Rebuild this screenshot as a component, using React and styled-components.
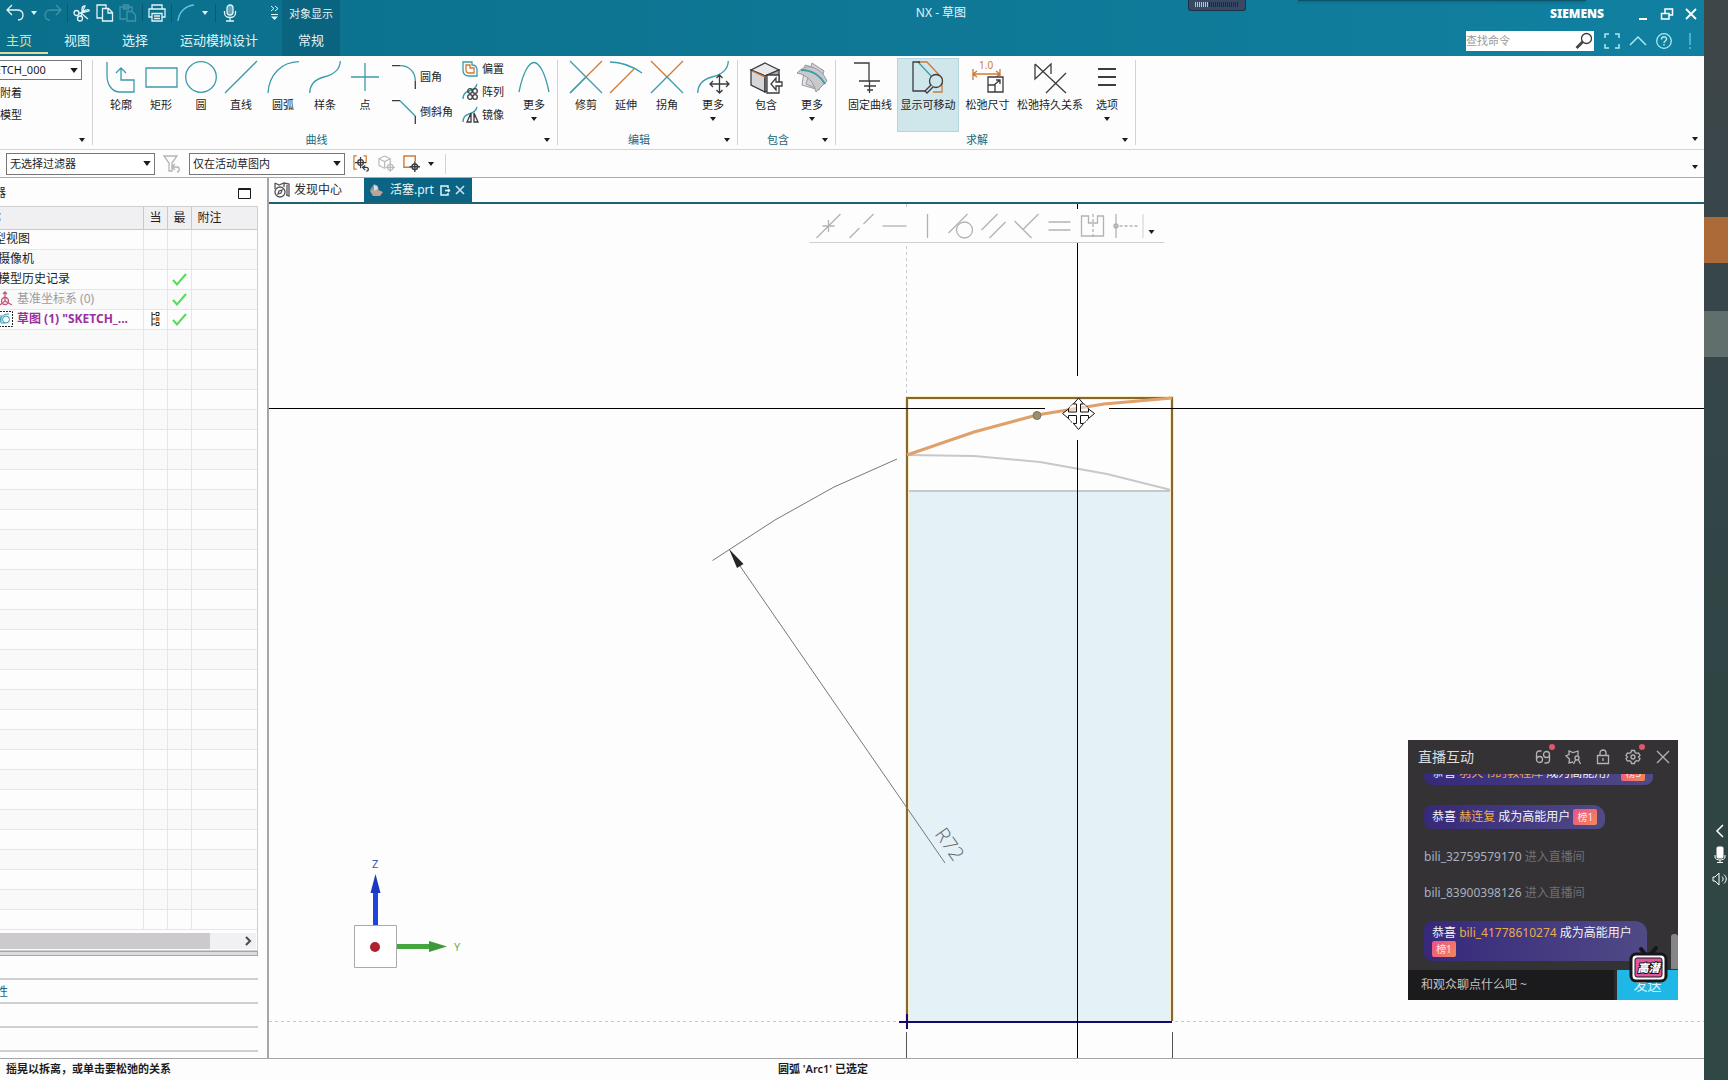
import React, { useState } from "react";
import styled, { createGlobalStyle } from "styled-components";

const GlobalStyle = createGlobalStyle`
    * {
        box-sizing: border-box;
    }

    body {
        margin: 0;
        background: #35464a;
        font-family: "Noto Sans", "Noto Sans CJK SC", sans-serif;
        font-size: 12px;
        line-height: 16px;
        color: #1c1c1e;
    }

    button, input, select {
        font: inherit;
        color: inherit;
        margin: 0;
        padding: 0;
        border: none;
        background: none;
        border-radius: 0;
        outline: none;
    }

    svg {
        display: block;
        fill: none;
        flex: none;
        overflow: visible;
    }
`;

const Screen = styled.div`
    display: grid;
    grid-template-columns: minmax(0, 1fr) 24px;
    min-height: 100vh;
`;

const Window = styled.div`
    display: flex;
    flex-direction: column;
    min-width: 0;
    overflow: hidden;
    background: #fdfdfd;
`;

/* title bar */

const Header = styled.header`
    position: relative;
    background: linear-gradient(90deg, #0a6f8b 0%, #0d7592 35%, #1180a0 100%);
    color: #e3f4f8;
`;

const HeaderRow = styled.div`
    display: flex;
    height: ${props => props.$height}px;
`;

const QuickBar = styled.div`
    display: flex;
    align-items: center;
    gap: 5px;
    width: 282px;
    padding: 0 0 2px 6px;
`;

const QuickButton = styled.button`
    display: flex;
    align-items: center;
    justify-content: center;
    width: ${props => props.$narrow ? 10 : 18}px;
    height: 22px;
    opacity: ${props => props.disabled ? 0.3 : 1};
    margin-left: ${props => props.$end ? 'auto' : 0};
    margin-right: ${props => props.$end ? 3 : 0}px;
`;

const QuickLine = styled.span`
    width: 1px;
    height: 18px;
    background: #075a73;
`;

const ContextTitle = styled.div`
    display: flex;
    align-items: center;
    justify-content: center;
    width: 58px;
    background: #0a6480;
    font-size: 11px;
`;

const Title = styled.h1`
    flex: 1;
    margin: 0;
    padding-top: 5px;
    font-size: 12px;
    font-weight: 400;
    line-height: 16px;
    text-align: center;
`;

const BrandBar = styled.div`
    display: flex;
    align-items: center;
    width: 162px;
    padding: 0 1px 0 8px;
    justify-content: space-between;
`;

const Brand = styled.span`
    font-size: 12px;
    font-weight: 900;
    color: #fff;
`;

const WindowButtons = styled.div`
    display: flex;
`;

const WindowButton = styled.button`
    display: flex;
    align-items: center;
    justify-content: center;
    width: 24px;
    height: 24px;
`;

const Tabs = styled.nav`
    display: flex;
    width: 282px;
    margin-left: -10px;
    margin-right: 10px;
`;

const Tab = styled.button`
    height: 27px;
    padding: 0 16px;
    font-size: 13px;
    white-space: nowrap;
    color: ${props => props.$active ? '#e0dc8c' : '#e3f4f8'};
    border-bottom: 2px solid ${props => props.$active ? '#dcdc9c' : 'transparent'};
`;

const ContextTab = styled.div`
    width: 58px;
    background: #0a6480;
`;

const HeaderTools = styled.div`
    display: flex;
    align-items: center;
    gap: 10px;
    margin-left: auto;
    padding: 0 12px 2px 0;
`;

const SearchBox = styled.label`
    display: flex;
    align-items: center;
    width: 128px;
    height: 20px;
    padding-right: 2px;
    background: #fff;
`;

const SearchInput = styled.input`
    flex: 1;
    min-width: 0;
    font-size: 11px;
    color: #333;
    &::placeholder {
        color: #9a9a9a;
        opacity: 1;
    }
`;

const IconButton = styled.button`
    display: flex;
    align-items: center;
    justify-content: center;
`;

const Recorder = styled.div`
    position: absolute;
    top: 0;
    right: 458px;
    width: 58px;
    height: 11px;
    padding: 2px 6px;
    border: 1px solid #1c3145;
    border-top: none;
    border-radius: 0 0 3px 3px;
    background: #384a63;
`;

const DockShadow = styled.div`
    position: absolute;
    top: 0;
    right: 118px;
    width: 288px;
    height: 1px;
    background: #0a5569;
    box-shadow: 0 1px 3px #0a5569;
`;

/* ribbon */

const Ribbon = styled.div`
    display: flex;
    height: 94px;
    padding-top: 2px;
    border-bottom: 1px solid #d5d5d7;
    font-size: 11px;
`;

const Group = styled.section`
    display: flex;
    flex-direction: column;
    width: ${props => props.$width}px;
    position: relative;
    &::after {
        content: "";
        position: absolute;
        top: 2px;
        bottom: 4px;
        right: 0;
        width: 1px;
        background: #d3d3d6;
    }
`;

const GroupItems = styled.div`
    display: grid;
    grid-template-columns: ${props => props.$cols};
    height: 74px;
    padding-left: ${props => props.$pad}px;
`;

const GroupFooter = styled.div`
    display: flex;
    align-items: center;
    justify-content: center;
    height: 16px;
    padding-right: 18px;
    position: relative;
    color: #21687c;
`;

const Launcher = styled.button`
    position: absolute;
    right: ${props => props.$edge ? 4 : 6}px;
    bottom: ${props => props.$edge ? 5 : 3}px;
    width: 10px;
    height: 10px;
    display: flex;
    align-items: center;
    justify-content: center;
    color: #1c1c1e;
`;

const Tool = styled.button`
    display: flex;
    flex-direction: column;
    align-items: center;
    gap: 4px;
    height: 74px;
    padding-top: 3px;
    white-space: nowrap;
    background: ${props => props.$active ? '#cfe6eb' : 'none'};
    box-shadow: ${props => props.$active ? 'inset 0 0 0 1px #b3d7de' : 'none'};
`;

const ToolStack = styled.div`
    display: flex;
    flex-direction: column;
    justify-content: space-between;
    padding: ${props => props.$tight ? '3px 0 9px' : '7px 0 8px 7px'};
`;

const SmallTool = styled.button`
    display: flex;
    align-items: center;
    gap: 4px;
    white-space: nowrap;
`;

const SketchGroup = styled.div`
    display: flex;
    flex-direction: column;
    align-items: flex-start;
    gap: 4px;
    height: 74px;
    padding-top: 2px;
    overflow: hidden;
`;

const SketchAction = styled.button`
    height: 18px;
    white-space: nowrap;
`;

const RibbonEnd = styled.div`
    flex: 1;
    position: relative;
`;

/* selection bar */

const SelectionBar = styled.div`
    display: flex;
    align-items: center;
    position: relative;
    height: 28px;
    padding-left: 6px;
    border-bottom: 1px solid #a9a9ac;
    font-size: 11px;
`;

const SelectBox = styled.div`
    position: relative;
    width: ${props => props.$width}px;
    height: ${props => props.$cut ? 20 : 22}px;
    margin-left: ${props => props.$cut ? -28 : 0}px;
    svg {
        position: absolute;
        right: 4px;
        top: 8px;
        pointer-events: none;
    }
`;

const Select = styled.select`
    appearance: none;
    width: 100%;
    height: 100%;
    padding: 0 16px 0 ${props => props.$pad || 3}px;
    border: 1px solid #77777a;
    background: #fff;
`;

const BarIcons = styled.div`
    display: flex;
    align-items: center;
    gap: 8px;
    padding: 0 8px;
`;

const BarDivider = styled.span`
    width: 1px;
    height: 20px;
    margin-left: 3px;
    background: #d3d3d6;
`;

/* body */

const Body = styled.div`
    display: flex;
    flex: 1;
`;

const SidePanel = styled.aside`
    width: 269px;
    flex: none;
    padding-right: 9px;
    border-right: 2px solid #a6a6a9;
    overflow: hidden;
`;

const PanelHead = styled.div`
    display: flex;
    align-items: center;
    justify-content: space-between;
    height: 28px;
    padding: 2px 7px 0 0;
`;

const PanelTitle = styled.h2`
    margin: 0 0 0 -54px;
    font-size: 12px;
    font-weight: 400;
`;

const TreeBox = styled.div`
    border: 1px solid #d0d0d3;
    border-left: none;
`;

const Tree = styled.table`
    width: 100%;
    table-layout: fixed;
    border-collapse: collapse;

    th, td {
        padding: 0;
        border-right: 1px solid #e6e6e8;
        border-bottom: 1px solid #e6e6e8;
        overflow: hidden;
        white-space: nowrap;
    }

    th:last-child, td:last-child {
        border-right: none;
    }

    th {
        height: 22px;
        background: #f0eff2;
        border-color: #c9c9cc;
        font-weight: 400;
        text-align: left;
    }

    td {
        height: 20px;
    }

    tbody tr:nth-child(even) {
        background: #f9f9fa;
    }
`;

const HeadCell = styled.span`
    display: block;
    padding-left: 6px;
`;

const NodeName = styled.span`
    display: flex;
    align-items: center;
    gap: 4px;
    height: 16px;
    margin-left: ${props => props.$left}px;
    color: ${props => props.$color || 'inherit'};
    font-weight: ${props => props.$bold ? 700 : 400};
`;

const CellIcon = styled.span`
    display: flex;
    justify-content: center;
`;

const ScrollTrack = styled.div`
    display: flex;
    align-items: center;
    justify-content: space-between;
    height: 16px;
    margin: 3px 1px 1px 0;
    padding-right: 4px;
    background: #f1f0f3;
`;

const ScrollThumb = styled.div`
    width: 210px;
    height: 16px;
    background: #cdcacd;
`;

const Splitter = styled.div`
    height: 5px;
    border: 1px solid #a6a6a9;
    border-left: none;
    background: #dcdbde;
`;

const Section = styled.button`
    display: block;
    width: 100%;
    height: 24px;
    padding-top: 2px;
    text-align: left;
    color: #21687c;
    border-bottom: 2px solid #cdcfd0;
    span {
        margin-left: -28px;
    }
`;

const Main = styled.main`
    display: flex;
    flex-direction: column;
    flex: 1;
    min-width: 0;
`;

const FileTabs = styled.div`
    display: flex;
    height: 26px;
    border-bottom: 2px solid #1d6173;
`;

const FileTab = styled.button`
    display: flex;
    align-items: center;
    gap: ${props => props.$active ? 6 : 4}px;
    width: ${props => props.$width}px;
    height: 24px;
    padding-left: 5px;
    background: ${props => props.$active ? '#0c6484' : 'none'};
    color: ${props => props.$active ? '#e3f4f8' : '#2a2a2c'};
`;

const Canvas = styled.div`
    position: relative;
    flex: 1;
    overflow: hidden;
    background: #fdfdfd;
`;

const Drawing = styled.svg`
    position: absolute;
    inset: 0;
    width: 100%;
    height: 100%;
`;

const RelationBar = styled.div`
    position: absolute;
    top: 5px;
    left: 50%;
    transform: translateX(-50%);
    display: flex;
    align-items: center;
    height: 34px;
    padding: 0 5px 0 3px;
    background: #fdfdfd;
    border-bottom: 1px solid #cfcfd1;
`;

const RelationButton = styled.button`
    display: flex;
    align-items: center;
    justify-content: center;
    width: 33px;
    height: 32px;
`;

const RelationMore = styled.button`
    display: flex;
    align-items: flex-end;
    justify-content: center;
    width: 17px;
    height: 24px;
    padding-bottom: 4px;
    border-left: 1px solid #cfcfd1;
`;

/* live chat */

const Chat = styled.section`
    position: absolute;
    right: 26px;
    bottom: 58px;
    width: 270px;
    background: #343235;
    color: #f2f2f4;
`;

const ChatHead = styled.div`
    display: flex;
    align-items: center;
    justify-content: space-between;
    height: 34px;
    padding: 0 7px 0 10px;
`;

const ChatTitle = styled.h2`
    margin: 0;
    font-size: 14px;
    font-weight: 400;
    color: #dcdcdf;
`;

const ChatTools = styled.div`
    display: flex;
    gap: 14px;
`;

const ChatButton = styled.button`
    position: relative;
    width: 16px;
    height: 16px;
`;

const Dot = styled.span`
    position: absolute;
    top: -5px;
    right: -4px;
    width: 6px;
    height: 6px;
    border-radius: 50%;
    background: #e0566a;
`;

const ChatBody = styled.div`
    position: relative;
    display: flex;
    flex-direction: column;
    justify-content: flex-end;
    align-items: flex-start;
    gap: 20px;
    height: 196px;
    padding: 0 20px 9px 16px;
    overflow: hidden;
`;

const Cheer = styled.div`
    flex: none;
    max-width: ${props => props.$wrap ? '223px' : 'none'};
    padding: 4px 8px;
    border-radius: 8px 12px 8px 8px;
    background: linear-gradient(90deg, #36297a, #504a86);
    line-height: 16px;
    white-space: ${props => props.$wrap ? 'normal' : 'nowrap'};
`;

const CheerName = styled.span`
    color: #e9ac4c;
`;

const RankBadge = styled.span`
    display: inline-block;
    width: 24px;
    height: 16px;
    border-radius: 2px;
    background: linear-gradient(135deg, #ee4f8c, #f18a55);
    font-size: 10px;
    line-height: 16px;
    text-align: center;
    vertical-align: top;
    color: #ffe6e6;
`;

const Entry = styled.div`
    flex: none;
    color: #a9b0bf;
    white-space: nowrap;
    span {
        color: #716f73;
    }
`;

const ChatThumb = styled.div`
    position: absolute;
    right: 0;
    bottom: 1px;
    width: 7px;
    height: 35px;
    border-radius: 3px 3px 0 0;
    background: #858489;
`;

const ChatForm = styled.form`
    display: flex;
    height: 30px;
`;

const ChatInput = styled.input`
    flex: 1;
    min-width: 0;
    padding-left: 13px;
    background: #1b1a1c;
    border-right: 3px solid #2a2a2d;
    &::placeholder {
        color: #c0c0c3;
        opacity: 1;
    }
`;

const SendButton = styled.button`
    width: 61px;
    background: #1fb7e6;
    font-size: 14px;
    color: #d8f2fb;
`;

const Sticker = styled.svg`
    position: absolute;
    right: 10px;
    bottom: 17px;
`;

/* bottom and desktop edge */

const StatusBar = styled.footer`
    display: grid;
    grid-template-columns: 772px 1fr;
    align-items: center;
    height: 22px;
    padding: 0 0 1px 6px;
    border-top: 1px solid #a6a6a9;
    font-size: 11px;
    font-weight: 600;
`;

const DesktopEdge = styled.div`
    display: flex;
    flex-direction: column;
    align-items: flex-end;
    overflow: hidden;
    padding-top: 217px;
    background: linear-gradient(180deg, #3f4648 0%, #38464a 20%, #2e4544 70%, #2f4745 100%);
`;

const EdgeBlock = styled.div`
    width: 24px;
    height: 46px;
    margin-bottom: 48px;
    background: ${props => props.$color};
`;

const EdgeIcons = styled.div`
    display: flex;
    flex-direction: column;
    align-items: center;
    gap: 9px;
    width: 16px;
    margin-top: 419px;
`;

const TEAL = "#3a9bab";
const ORANGE = "#cf7a35";
const INK = "#3c3c40";

function Caret({ color = "#1c1c1e", size = 6 }) {
    return (
        <svg width={size} height={size / 2 + 1} viewBox="0 0 6 4">
            <path d="M0 0h6L3 4z" fill={color} />
        </svg>
    );
}

function Icon({ size = 32, box = 32, stroke = TEAL, width = 1.3, children }) {
    return (
        <svg width={size} height={size} viewBox={`0 0 ${box} ${box}`} stroke={stroke} strokeWidth={width}>
            {children}
        </svg>
    );
}

const icons = {
    profile: <Icon><path d="M2 1v13c0 10 5 17 13 17h14V19H16V7M11 12l5-5 5 5" /></Icon>,
    rect: <Icon><path d="M1 7h31v19H1z" /></Icon>,
    circle: <Icon><circle cx="16" cy="16" r="15.3" /></Icon>,
    line: <Icon><path d="M0 32 32 0" /></Icon>,
    arc: <Icon><path d="M1 32C2 14 14 1 32 .7" /></Icon>,
    spline: <Icon><path d="M.7 32C1 22 7 18 15 16S31 10 31.300 0" /></Icon>,
    point: <Icon><path d="M16 2v28M2 16h28" /></Icon>,
    moreCurve: <Icon><path d="M1 31C5 11 11 1.500 16 1.500S27 11 31 31" /></Icon>,
    trim: <Icon><path d="M0 32 32 0" stroke={ORANGE} /><path d="M0 0l32 32M0 32l16-16" /></Icon>,
    extend: <Icon><path d="M0 32 24 8" stroke={ORANGE} /><path d="M0 1c13 0 22 4 32 11" /></Icon>,
    corner: <Icon><path d="M0 0l16 16L32 0" stroke={ORANGE} /><path d="M0 32l16-16 16 16" /></Icon>,
    moreEdit: (
        <Icon>
            <path d="M.7 32C1 22 7 18 15 16S31 10 31.300 0" />
            <path stroke={INK} d="M22.500 14v18M13 23h19M19.500 17l3-3 3 3M19.500 29l3 3 3-3M16 20l-3 3 3 3M29 20l3 3-3 3" />
        </Icon>
    ),
    include: (
        <Icon stroke={INK}>
            <path fill="#e9e9eb" d="M15 2 29 9 15 15 1 9z" />
            <path fill="#d6d6d9" d="M1 9v15l14 7V15z" />
            <path fill="#aaaaae" d="M15 15v16l14-7V9z" />
            <path stroke={ORANGE} d="M2 10l13 6" />
            <path fill="#fff" d="M17 14h12v18H17z" />
            <path fill="#fff" d="M32 21h-6v-4l-5 6 5 6v-4h6z" />
        </Icon>
    ),
    moreInclude: (
        <Icon stroke="#98989c" width={1}>
            <path fill="#e4e4e7" d="M9 4l18 5-4 20-17-5z" />
            <path fill="#d2d2d6" d="M16 2l12 8-6 18-12-5z" />
            <path fill="#c9c9cd" d="M1 12c5-5 9-7 14-6 8 2 13 7 16 14l-11 11C18 21 11 14 1 12z" />
            <path stroke={TEAL} strokeWidth="2" d="M5 9c12 0 20 7 24 14" />
        </Icon>
    ),
    fix: <Icon stroke={INK}><path d="M0 2h15v18M5 20h21M10 25h12M13 29h6M15.500 20v12" /></Icon>,
    showMovable: (
        <Icon stroke={INK}>
            <path stroke={ORANGE} d="M6 1h9l15 16v14h-9" />
            <path stroke={TEAL} d="M6 1l15 16" />
            <path d="M8 1H1v29h12" />
            <circle cx="24" cy="20" r="6.500" fill="#cfe6eb" />
            <path fill="#cfe6eb" d="M19 24l-6 6 2 2 6-6" />
        </Icon>
    ),
    relaxDim: (
        <Icon stroke={ORANGE}>
            <path d="M1 8v11M28 8v7M1 13h27M5 10l-4 3 4 3M24 10l4 3-4 3" />
            <text x="7" y="8" fontSize="10" fill={ORANGE} stroke="none">1.0</text>
            <path stroke={INK} fill="#fdfdfd" d="M16 16h15v15H16zM16 24h7v7M22 24l6-5M24 19h4v4" />
        </Icon>
    ),
    relaxRel: <Icon stroke={INK}><path d="M1 3v15L17 3v10M1 3l31 29M32 12 12 32" /></Icon>,
    options: <Icon stroke={INK} width={2}><path d="M7 8h18M7 16h18M7 24h18" /></Icon>,
};

function RibbonTool({ icon, label, more, active }) {
    return (
        <Tool type="button" $active={active}>
            {icons[icon]}
            <span>{label}</span>
            {more && <Caret />}
        </Tool>
    );
}

function RibbonGroup({ label, width, pad, cols, children }) {
    return (
        <Group $width={width}>
            <GroupItems $cols={cols} $pad={pad}>{children}</GroupItems>
            <GroupFooter>
                {label}
                <Launcher type="button" aria-label={label}><Caret /></Launcher>
            </GroupFooter>
        </Group>
    );
}

const treeRows = [
    { name: "模型视图", left: -18 },
    { name: "摄像机", left: -2 },
    { name: "模型历史记录", left: -2, check: true },
    { name: "基准坐标系 (0)", left: 0, color: "#9c9c9f", icon: "csys", check: true },
    { name: '草图 (1) "SKETCH_...', left: 0, color: "#9b2f9f", bold: true, icon: "sketch", current: true, check: true },
    ...Array.from({ length: 30 }, () => ({})),
];

const nodeIcons = {
    csys: (
        <svg width="13" height="16" viewBox="0 0 13 16" stroke="#c2557f" strokeWidth="1.300">
            <path d="M5 1v9L0 14M5 10l7 4M3 3l2-2 2 2" />
            <circle cx="5" cy="10" r="3.500" />
        </svg>
    ),
    sketch: (
        <svg width="13" height="16" viewBox="0 0 13 16" stroke="#2f9bb0">
            <path stroke="#222" strokeDasharray="2 1" d="M0 .5h12.500v15H0" />
            <path d="M0 11c0-5 3-8 9-8M1 4v8h4" />
            <circle cx="6" cy="8.500" r="3.500" />
        </svg>
    ),
};

function PartTree() {
    return (
        <TreeBox>
            <Tree>
                <colgroup>
                    <col />
                    <col width="24" />
                    <col width="24" />
                    <col width="66" />
                </colgroup>
                <thead>
                    <tr>
                        <th><NodeName $left={-23}>名称</NodeName></th>
                        <th><HeadCell>当</HeadCell></th>
                        <th><HeadCell>最</HeadCell></th>
                        <th><HeadCell>附注</HeadCell></th>
                    </tr>
                </thead>
                <tbody>
                    {treeRows.map((row, i) => (
                        <tr key={i}>
                            <td>
                                {row.name && (
                                    <NodeName $left={row.left} $color={row.color} $bold={row.bold}>
                                        {nodeIcons[row.icon]}
                                        {row.name}
                                    </NodeName>
                                )}
                            </td>
                            <td>
                                {row.current && (
                                    <CellIcon>
                                        <svg width="9" height="14" viewBox="0 0 9 14" stroke="#2b2b2d">
                                            <path d="M1 0v14M1 2.500h3M1 7h3M1 12h3M5 .5h3v3H5zM5 10.500h3v3H5z" />
                                            <path stroke={ORANGE} fill={ORANGE} d="M5 5.500h3v3H5z" />
                                        </svg>
                                    </CellIcon>
                                )}
                            </td>
                            <td>
                                {row.check && (
                                    <CellIcon>
                                        <svg width="14" height="13" viewBox="0 0 14 13" stroke="#55dd5a" strokeWidth="2">
                                            <path d="M1 7l4 4.500L14 1" />
                                        </svg>
                                    </CellIcon>
                                )}
                            </td>
                            <td></td>
                        </tr>
                    ))}
                </tbody>
            </Tree>
            <ScrollTrack>
                <ScrollThumb />
                <svg width="7" height="8" viewBox="0 0 7 8" stroke="#4a4a4d" strokeWidth="2"><path d="M1 0l4 4-4 4" /></svg>
            </ScrollTrack>
        </TreeBox>
    );
}

const relations = [
    { name: "重合", shape: <path d="M0 24 24 0M6 12h6v6M18 12h-6V6" /> },
    { name: "共线", shape: <path d="M0 24 10 14M14 10 24 0" /> },
    { name: "水平", shape: <path d="M0 12h24" /> },
    { name: "竖直", shape: <path d="M12 0v24" /> },
    { name: "相切", shape: <><path d="M0 19 19 0" /><circle cx="16" cy="16" r="8" /></> },
    { name: "平行", shape: <path d="M0 16 16 0M8 24 24 8" /> },
    { name: "垂直", shape: <path d="M0 7l17 17M8 16 24 0" /> },
    { name: "相等", shape: <path d="M1 8h22M1 16h22" /> },
    { name: "对称", shape: <><path d="M1 2h7v7h9V2h6v20H1z" /><path strokeDasharray="3 2" d="M12.500 0v24" /></> },
    { name: "中点对齐", shape: <><path d="M2.500 0v24" /><circle cx="2.500" cy="12" r="2" fill="#bbb" /><path strokeDasharray="3 2" d="M6 12h18" /></> },
];

function SketchDrawing() {
    return (
        <Drawing>
            {/* model coordinates start at the window corner */}
            <g transform="translate(-269 -204)">
                <path fill="#e4f1f6" d="M908 491h263v530H908z" />
                <path stroke="#c9c9cc" strokeDasharray="3 3" d="M906.500 204v193M269 1021.500h1435" />
                <path stroke="#555" d="M906.500 1032v26M1172.500 1032v26" />
                <path stroke="#c8c8ca" strokeWidth="2" d="M907 491h265M907 455l67 1 66 6 67 12 64 16" />
                <path stroke="#f7ecc8" strokeWidth="4" d="M907 1021V398h265v623" />
                <path stroke="#86672f" strokeWidth="2" d="M907 1021V398h265v623" />
                <path stroke="#dfa06a" strokeWidth="3" d="M907 455l67-23 63-17 67-11 68-6" />
                <path stroke="#12096b" strokeWidth="2" d="M899 1022h273M907 1014v15" />
                <path stroke="#77777a" d="M712.500 560.500 775 520l59-33 63-28M740 566l205 297" />
                <path fill="#26262a" d="M729 549l14.500 15-6.500 4z" />
                <text
                    transform="translate(934 834) rotate(55)"
                    fontFamily="'Open Sans', sans-serif"
                    fontSize="20"
                    fontWeight="300"
                    fill="#5f666a"
                >
                    R72
                </text>
                <path stroke="#000" d="M1077.500 204v172M1077.500 440v618M269 408.500h776M1109 408.500h595" />
                <circle cx="1037" cy="415.500" r="4" fill="#97906f" stroke="#7c7658" />
                <circle cx="1078.500" cy="413.500" r="11" stroke="#111" strokeDasharray="2 1" fill="#fff" fillOpacity=".5" />
                <path
                    stroke="#111"
                    fill="#fff"
                    d="M1078.500 398l5 6h-3v8h8v-3l6 4.500-6 5v-3h-8v8h3l-5 6-5-6h3v-8h-8v3l-6-5 6-4.500v3h8v-8h-3z"
                />

                <path fill="#fff" stroke="#aaaaad" d="M354.500 925.500h42v42h-42z" />
                <path fill="#1c46dd" d="M373 925v-33h5v33z" />
                <path fill="#1a38c4" d="M375.500 874l5 19h-10z" />
                <path fill="#43a63f" d="M397 944h33v5h-33z" />
                <path fill="#3c9a3a" d="M429 941l18 5.500-18 5.500z" />
                <circle cx="375" cy="947" r="5" fill="#b01f30" />
                <text x="372" y="868" fontSize="11" fill="#3a58b8">Z</text>
                <text x="454" y="951" fontSize="11" fill="#6bae68">Y</text>
            </g>
        </Drawing>
    );
}

function LiveChat() {
    const [message, setMessage] = useState('');

    const onSubmit = (e) => {
        e.preventDefault();
        setMessage('');
    };

    return (
        <Chat>
            <ChatHead>
                <ChatTitle>直播互动</ChatTitle>
                <ChatTools>
                    <ChatButton type="button" aria-label="连线">
                        <Icon size={16} box={16} stroke="#b4b4b7">
                            <path d="M6.500 2H4.500c-2 0-3 1-3 3v5" />
                            <circle cx="4.500" cy="10.500" r="3" />
                            <circle cx="11.500" cy="5.500" r="3" />
                            <path d="M14.500 6v5c0 2-1 3-3 3H9.500" />
                        </Icon>
                        <Dot />
                    </ChatButton>
                    <ChatButton type="button" aria-label="互动">
                        <Icon size={16} box={16} stroke="#b4b4b7">
                            <path d="M8 13l-4 1 .5-4L1 7l3-1.500L4 2l4 1.500L13 2v4.500" />
                            <circle cx="12" cy="9" r="2" />
                            <path d="M8.500 15l2-4M15.500 15l-2-4" />
                        </Icon>
                    </ChatButton>
                    <ChatButton type="button" aria-label="锁定">
                        <Icon size={16} box={16} stroke="#b4b4b7">
                            <path d="M2.500 6.500h11v8h-11zM5 6V4c0-4 6-4 6 0v2M8 9v3" />
                        </Icon>
                    </ChatButton>
                    <ChatButton type="button" aria-label="设置">
                        <Icon size={16} box={16} stroke="#b4b4b7">
                            <path d="M6.500 1.500h3l.6 2 1.500.9 2-.5 1.400 2.500L13.500 8l1.500 1.600-1.400 2.500-2-.5-1.500.9-.6 2h-3l-.6-2-1.500-.9-2 .5L1 9.600 2.500 8 1 6.400l1.400-2.500 2 .5 1.500-.9z" />
                            <circle cx="8" cy="8" r="2" />
                        </Icon>
                        <Dot />
                    </ChatButton>
                    <ChatButton type="button" aria-label="关闭">
                        <Icon size={16} box={16} stroke="#b4b4b7"><path d="M2 2l12 12M14 2 2 14" /></Icon>
                    </ChatButton>
                </ChatTools>
            </ChatHead>
            <ChatBody>
                <Cheer>恭喜 <CheerName>羽天书的教程库</CheerName> 成为高能用户 <RankBadge>榜3</RankBadge></Cheer>
                <Cheer>恭喜 <CheerName>赫连复</CheerName> 成为高能用户 <RankBadge>榜1</RankBadge></Cheer>
                <Entry>bili_32759579170 <span>进入直播间</span></Entry>
                <Entry>bili_83900398126 <span>进入直播间</span></Entry>
                <Cheer $wrap>恭喜 <CheerName>bili_41778610274</CheerName> 成为高能用户 <RankBadge>榜1</RankBadge></Cheer>
                <ChatThumb />
            </ChatBody>
            <ChatForm onSubmit={onSubmit}>
                <ChatInput
                    aria-label="聊天"
                    value={message}
                    onChange={(e) => setMessage(e.target.value)}
                    placeholder="和观众聊点什么吧 ~"
                />
                <SendButton type="submit">发送</SendButton>
            </ChatForm>
            <Sticker width="40" height="37" viewBox="0 0 40 37">
                <path stroke="#17161a" strokeWidth="4" strokeLinecap="round" d="M13 3l4 5M28 2l-5 6" />
                <rect x="3" y="8" width="35" height="27" rx="5" fill="#fff" stroke="#17161a" strokeWidth="3" />
                <rect x="7" y="12" width="27" height="19" rx="2" fill="#e2559a" stroke="#17161a" strokeWidth="1" />
                <text
                    x="20.500"
                    y="26"
                    textAnchor="middle"
                    fontSize="11"
                    fontWeight="900"
                    fontStyle="italic"
                    fill="#fff"
                    stroke="#17161a"
                    strokeWidth="2"
                    paintOrder="stroke"
                >
                    高潜
                </text>
            </Sticker>
        </Chat>
    );
}

function AppHeader() {
    return (
        <Header>
            <HeaderRow $height={27}>
                <QuickBar>
                    <QuickButton type="button" aria-label="撤消">
                        <Icon size={18} box={18} stroke="#e3f4f8"><path d="M6 1 1 6l5 5M1 6h10c4 0 6 2 6 5s-2 5-5 5" /></Icon>
                    </QuickButton>
                    <QuickButton type="button" aria-label="撤消列表" $narrow><Caret color="#e3f4f8" /></QuickButton>
                    <QuickButton type="button" aria-label="重做" disabled>
                        <Icon size={18} box={18} stroke="#bfe6ef"><path d="M12 1l5 5-5 5M17 6H7c-4 0-6 2-6 5s2 5 5 5" /></Icon>
                    </QuickButton>
                    <QuickLine />
                    <QuickButton type="button" aria-label="剪切">
                        <Icon size={18} box={18} stroke="#e3f4f8">
                            <circle cx="3.500" cy="9" r="2.500" />
                            <circle cx="7" cy="14.500" r="2.500" />
                            <path d="M6 9.500l10-2.500c1-1-1-2-3-1l-7 3.500M8 12l4-10c-2 0-3 1-3 3v5l6 5" />
                        </Icon>
                    </QuickButton>
                    <QuickButton type="button" aria-label="复制">
                        <Icon size={18} box={18} stroke="#e3f4f8"><path d="M6 14H1V1h9v3M6.500 4.500h6l4 4v8.500h-10zM12 5v4h4" /></Icon>
                    </QuickButton>
                    <QuickButton type="button" aria-label="粘贴" disabled>
                        <Icon size={18} box={18} stroke="#bfe6ef"><path d="M7 15H1V3h12v4M4.500 1h5v4h-5zM8 7.500h5l3.500 3.500v6H8z" /></Icon>
                    </QuickButton>
                    <QuickLine />
                    <QuickButton type="button" aria-label="打印">
                        <Icon size={18} box={18} stroke="#e3f4f8"><path d="M4 5V1h10v4M4 13H1V5h16v8h-3M4 9.500h10V17H4zM6 12h6M6 14.500h6" /></Icon>
                    </QuickButton>
                    <QuickLine />
                    <QuickButton type="button" aria-label="圆弧">
                        <Icon size={18} box={18} stroke="#5ecbe4"><path d="M1 17C2 8 8 2 17 1" /></Icon>
                    </QuickButton>
                    <QuickButton type="button" aria-label="圆弧列表" $narrow><Caret color="#e3f4f8" /></QuickButton>
                    <QuickLine />
                    <QuickButton type="button" aria-label="语音">
                        <Icon size={18} box={18} stroke="#e3f4f8">
                            <rect x="6" y="1" width="6" height="10" rx="3" fill="#e3f4f8" fillOpacity=".4" />
                            <path d="M3.500 7v2c0 6 11 6 11 0V7M9 13.500V17M5 17h8" />
                        </Icon>
                    </QuickButton>
                    <QuickButton type="button" aria-label="更多命令" $narrow $end>
                        <svg width="9" height="14" viewBox="0 0 9 14" stroke="#e3f4f8">
                            <path d="M1 0l3 2.500L1 5M5 0l3 2.500L5 5M1 8.500h7" />
                            <path fill="#e3f4f8" stroke="none" d="M1 10.500h7L4.500 14z" />
                        </svg>
                    </QuickButton>
                </QuickBar>
                <ContextTitle>对象显示</ContextTitle>
                <Title>NX - 草图</Title>
                <BrandBar>
                    <Brand>SIEMENS</Brand>
                    <WindowButtons>
                        <WindowButton type="button" aria-label="最小化">
                            <Icon size={12} box={12} stroke="#fff" width={2}><path d="M2 11h8" /></Icon>
                        </WindowButton>
                        <WindowButton type="button" aria-label="还原">
                            <Icon size={12} box={12} stroke="#fff" width={1.5}><path d="M4 5V1h7.500v6H8M.5 5.500H8V11H.5z" /></Icon>
                        </WindowButton>
                        <WindowButton type="button" aria-label="关闭">
                            <Icon size={12} box={12} stroke="#fff" width={1.8}><path d="M1 1l10 10M11 1 1 11" /></Icon>
                        </WindowButton>
                    </WindowButtons>
                </BrandBar>
            </HeaderRow>
            <HeaderRow $height={29}>
                <Tabs>
                    <Tab type="button" $active>主页</Tab>
                    <Tab type="button">视图</Tab>
                    <Tab type="button">选择</Tab>
                    <Tab type="button">运动模拟设计</Tab>
                </Tabs>
                <ContextTab>
                    <Tab type="button">常规</Tab>
                </ContextTab>
                <HeaderTools>
                    <SearchBox>
                        <SearchInput aria-label="查找命令" placeholder="查找命令" />
                        <Icon size={16} box={16} stroke={INK}>
                            <circle cx="10.500" cy="5.500" r="5" />
                            <path d="M7 9.500 1.500 15M6 8.500.5 14l1.500 1.500" />
                        </Icon>
                    </SearchBox>
                    <IconButton type="button" aria-label="全屏">
                        <Icon size={16} box={16} stroke="#aeeaf2" width={1.5}><path d="M5 1H1v4M11 1h4v4M5 15H1v-4M11 15h4v-4" /></Icon>
                    </IconButton>
                    <IconButton type="button" aria-label="最小化功能区">
                        <Icon size={16} box={16} stroke="#aeeaf2" width={1.5}><path d="M0 12l8-8 8 8" /></Icon>
                    </IconButton>
                    <IconButton type="button" aria-label="帮助">
                        <Icon size={16} box={16} stroke="#aeeaf2">
                            <circle cx="8" cy="8" r="7.300" />
                            <path strokeWidth="1.500" d="M5.500 6.500c0-3.500 5-3.500 5-.5 0 2-2.500 2-2.500 4M8 11v1.500" />
                        </Icon>
                    </IconButton>
                    <svg width="10" height="16" viewBox="0 0 10 16" stroke="#3db6cf" strokeWidth="2"><path d="M8 0v12M8 14v2" /></svg>
                </HeaderTools>
            </HeaderRow>
            <DockShadow />
            <Recorder>
                <svg width="44" height="5" viewBox="0 0 44 5">
                    <path stroke="#1d2a3a" strokeWidth="5" strokeDasharray="1 1" d="M14 2.500h30" />
                    <path stroke="#7fe6c6" strokeWidth="5" strokeDasharray="1 1" d="M0 2.500h14" />
                </svg>
            </Recorder>
        </Header>
    );
}

function App() {
    return (
        <Screen>
            <GlobalStyle />
            <Window>
                <AppHeader />

                <Ribbon>
                    <Group $width={93}>
                        <SketchGroup>
                            <SelectBox $width={110} $cut>
                                <Select aria-label="草图名" $pad={9} defaultValue="SKETCH_000">
                                    <option>SKETCH_000</option>
                                </Select>
                                <Caret size={8} />
                            </SelectBox>
                            <SketchAction type="button">附着</SketchAction>
                            <SketchAction type="button">模型</SketchAction>
                        </SketchGroup>
                        <GroupFooter>
                            <Launcher type="button" aria-label="草图"><Caret /></Launcher>
                        </GroupFooter>
                    </Group>
                    <RibbonGroup label="曲线" width={465} pad={8} cols="40px 40px 40px 40px 44px 40px 40px 77px 52px 40px">
                        <RibbonTool icon="profile" label="轮廓" />
                        <RibbonTool icon="rect" label="矩形" />
                        <RibbonTool icon="circle" label="圆" />
                        <RibbonTool icon="line" label="直线" />
                        <RibbonTool icon="arc" label="圆弧" />
                        <RibbonTool icon="spline" label="样条" />
                        <RibbonTool icon="point" label="点" />
                        <ToolStack>
                            <SmallTool type="button">
                                <Icon size={24} box={24}><path stroke={INK} d="M0 .7h8M23.300 16v8" /><path d="M8 .7c9 0 15.300 6 15.300 15.300" /></Icon>
                                圆角
                            </SmallTool>
                            <SmallTool type="button">
                                <Icon size={24} box={24}><path stroke={INK} d="M0 .7h8M23.300 16v8" /><path d="M8 .7 23.300 16" /></Icon>
                                倒斜角
                            </SmallTool>
                        </ToolStack>
                        <ToolStack $tight>
                            <SmallTool type="button">
                                <Icon size={16} box={16}>
                                    <path d="M1 1h9v3c3 0 5 2 5 5v6H7c-4 0-6-2-6-6z" />
                                    <path stroke={ORANGE} d="M4 4h4v3h4v5H7c-2 0-3-1-3-3z" />
                                </Icon>
                                偏置
                            </SmallTool>
                            <SmallTool type="button">
                                <Icon size={16} box={16}>
                                    <path d="M1 15c0-5 2-7 6-8s7-3 8-7" />
                                    <g stroke={INK}>
                                        <circle cx="8" cy="7" r="2.300" /><circle cx="13" cy="7" r="2.300" />
                                        <circle cx="8" cy="13" r="2.300" /><circle cx="13" cy="13" r="2.300" />
                                    </g>
                                </Icon>
                                阵列
                            </SmallTool>
                            <SmallTool type="button">
                                <Icon size={16} box={16}>
                                    <path d="M1 15c0-5 2-7 6-8s7-3 8-7" />
                                    <path stroke={INK} d="M9 6v9H5zM12 6v9h4z" />
                                </Icon>
                                镜像
                            </SmallTool>
                        </ToolStack>
                        <RibbonTool icon="moreCurve" label="更多" more />
                    </RibbonGroup>
                    <RibbonGroup label="编辑" width={180} pad={8} cols="40px 40px 42px 50px">
                        <RibbonTool icon="trim" label="修剪" />
                        <RibbonTool icon="extend" label="延伸" />
                        <RibbonTool icon="corner" label="拐角" />
                        <RibbonTool icon="moreEdit" label="更多" more />
                    </RibbonGroup>
                    <RibbonGroup label="包含" width={98} pad={4} cols="48px 44px">
                        <RibbonTool icon="include" label="包含" />
                        <RibbonTool icon="moreInclude" label="更多" more />
                    </RibbonGroup>
                    <RibbonGroup label="求解" width={300} pad={7} cols="54px 62px 57px 68px 46px">
                        <RibbonTool icon="fix" label="固定曲线" />
                        <RibbonTool icon="showMovable" label="显示可移动" active />
                        <RibbonTool icon="relaxDim" label="松弛尺寸" />
                        <RibbonTool icon="relaxRel" label="松弛持久关系" />
                        <RibbonTool icon="options" label="选项" more />
                    </RibbonGroup>
                    <RibbonEnd>
                        <Launcher type="button" aria-label="功能区选项" $edge><Caret /></Launcher>
                    </RibbonEnd>
                </Ribbon>

                <SelectionBar>
                    <SelectBox $width={149}>
                        <Select aria-label="选择过滤器" defaultValue="无选择过滤器">
                            <option>无选择过滤器</option>
                        </Select>
                        <Caret size={8} />
                    </SelectBox>
                    <BarIcons>
                        <IconButton type="button" aria-label="重置过滤器">
                            <Icon size={18} box={18} stroke="#b4b4b8"><path d="M1 1h13L9 8v8H6V8zM12 9l-3 3 3 3M9 12h5c3 0 3 5 0 5" /></Icon>
                        </IconButton>
                    </BarIcons>
                    <SelectBox $width={156}>
                        <Select aria-label="选择范围" defaultValue="仅在活动草图内">
                            <option>仅在活动草图内</option>
                        </Select>
                        <Caret size={8} />
                    </SelectBox>
                    <BarIcons>
                        <IconButton type="button" aria-label="捕捉点">
                            <Icon size={17} box={18} stroke={INK}>
                                <path stroke={ORANGE} d="M4 1H1v14h3M11 1h3v7" />
                                <circle cx="8" cy="8" r="3" />
                                <path d="M8 2v12M2 8h12M13 11l-3 2 3 3M10 13h4c3 0 3 4 0 4" />
                            </Icon>
                        </IconButton>
                        <IconButton type="button" aria-label="选择体">
                            <Icon size={17} box={18} stroke="#bcbcc0">
                                <path d="M7 1l6 3v5M7 1 1 4v7l6 3V7L1 4M7 7l6-3" />
                                <circle cx="13" cy="13" r="3" />
                                <path d="M13 8v10M8 13h10" />
                            </Icon>
                        </IconButton>
                        <IconButton type="button" aria-label="选择区域">
                            <Icon size={17} box={18} stroke={INK} width={1.5}>
                                <path stroke={ORANGE} d="M8 13H1V1h12v6" />
                                <circle cx="12.500" cy="12.500" r="3" />
                                <path d="M12.500 7v11M7 12.500h11" />
                            </Icon>
                        </IconButton>
                        <IconButton type="button" aria-label="更多选择"><Caret /></IconButton>
                    </BarIcons>
                    <BarDivider />
                    <Launcher type="button" aria-label="工具条选项" $edge><Caret /></Launcher>
                </SelectionBar>

                <Body>
                    <SidePanel>
                        <PanelHead>
                            <PanelTitle>部件导航器</PanelTitle>
                            <svg width="13" height="11" viewBox="0 0 13 11"><path stroke="#1c1c1e" d="M.5.5h12v10H.5zM0 1.500h13" /></svg>
                        </PanelHead>
                        <PartTree />
                        <Splitter />
                        <Section type="button" aria-label="依附关系" />
                        <Section type="button"><span>相关性</span></Section>
                        <Section type="button" aria-label="细节" />
                        <Section type="button" aria-label="预览" />
                    </SidePanel>

                    <Main>
                        <FileTabs>
                            <FileTab type="button" $width={95}>
                                <Icon size={16} box={16} stroke="#55555a">
                                    <path d="M1 1l4 2 5-2 5 1v12l-3-1M1 1v6M10 1v4M13 3v10" />
                                    <circle cx="6" cy="10" r="5" />
                                    <path d="M4 12l1-3 3-1-1 3z" />
                                </Icon>
                                发现中心
                            </FileTab>
                            <FileTab type="button" $width={108} $active>
                                <svg width="15" height="14" viewBox="0 0 15 14">
                                    <path fill="#8d959b" d="M5 1l4 2 1 5-6 3-3-4z" />
                                    <path fill="#b9a39b" d="M1 8l6-2 7 3-3 4H4z" />
                                    <path fill="#d9dde0" d="M5 2l3 1 1 3-4 2z" />
                                </svg>
                                活塞.prt
                                <svg width="10" height="11" viewBox="0 0 10 11" stroke="#e3f4f8" strokeWidth="1.500"><path d="M8 3V1H1v9h7V8M5 5.500h5M8 4l1.500 1.500L8 7" /></svg>
                                <svg width="8" height="8" viewBox="0 0 8 8" stroke="#c5dde4" strokeWidth="1.700"><path d="M0 0l8 8M8 0 0 8" /></svg>
                            </FileTab>
                        </FileTabs>
                        <Canvas>
                            <SketchDrawing />
                            <RelationBar>
                                {relations.map(({ name, shape }) => (
                                    <RelationButton type="button" key={name} aria-label={name}>
                                        <Icon size={24} box={24} stroke="#b2b2b5">{shape}</Icon>
                                    </RelationButton>
                                ))}
                                <RelationMore type="button" aria-label="更多关系"><Caret /></RelationMore>
                            </RelationBar>
                            <LiveChat />
                        </Canvas>
                    </Main>
                </Body>

                <StatusBar>
                    <span>摇晃以拆离，或单击要松弛的关系</span>
                    <span>圆弧 'Arc1' 已选定</span>
                </StatusBar>
            </Window>

            <DesktopEdge>
                <EdgeBlock $color="#ab6a38" />
                <EdgeBlock $color="#606e6c" />
                <EdgeIcons>
                    <svg width="8" height="14" viewBox="0 0 8 14" stroke="#fff" strokeWidth="1.500"><path d="M7 1 1 7l6 6" /></svg>
                    <svg width="12" height="16" viewBox="0 0 12 16" stroke="#fff">
                        <rect x="3" y="0" width="6" height="11" rx="1" fill="#fff" />
                        <path d="M1 8v2c0 4 10 4 10 0V8M6 13v2.500M3 15.500h6" />
                    </svg>
                    <svg width="16" height="14" viewBox="0 0 16 14" stroke="#fff"><path d="M1 5h2l4-4v12L3 9H1zM10 4.500c1.500 1.500 1.500 3.500 0 5M12 2.500c3 3 3 6 0 9" /></svg>
                </EdgeIcons>
            </DesktopEdge>
        </Screen>
    );
}

export default App;
